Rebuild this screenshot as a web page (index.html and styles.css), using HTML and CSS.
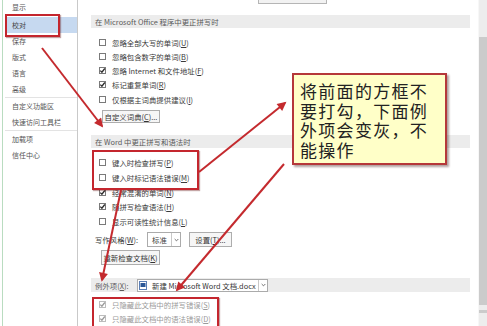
FILE: index.html
```html
<!DOCTYPE html>
<html lang="zh-CN">
<head>
<meta charset="utf-8">
<title>校对</title>
<link rel="stylesheet" href="styles.css">
</head>
<body>
<div class="app">
  <nav class="sidebar">
    <div class="nav-item first">显示</div>
    <div class="nav-item active">校对</div>
    <div class="nav-item">保存</div>
    <div class="nav-item">版式</div>
    <div class="nav-item">语言</div>
    <div class="nav-item">高级</div>
    <div class="nav-sep"></div>
    <div class="nav-item">自定义功能区</div>
    <div class="nav-item">快速访问工具栏</div>
    <div class="nav-sep"></div>
    <div class="nav-item">加载项</div>
    <div class="nav-item">信任中心</div>
  </nav>

  <main class="main">
    <div class="top-btn"></div>

    <div class="band band1">在 Microsoft Office 程序中更正拼写时</div>
    <ul class="opts opts1">
      <li><span class="cb"></span>忽略全部大写的单词(<u>U</u>)</li>
      <li><span class="cb"></span>忽略包含数字的单词(<u>B</u>)</li>
      <li><span class="cb"><svg viewBox="0 0 7 7"><path d="M1.3 3.6 L2.9 5.2 L5.8 1.5"/></svg></span>忽略 Internet 和文件地址(<u>F</u>)</li>
      <li><span class="cb"><svg viewBox="0 0 7 7"><path d="M1.3 3.6 L2.9 5.2 L5.8 1.5"/></svg></span>标记重复单词(<u>R</u>)</li>
      <li><span class="cb"></span>仅根据主词典提供建议(<u>I</u>)</li>
    </ul>
    <div class="btn btn-dict">自定义词典(<u>C</u>)...</div>

    <div class="band band2">在 Word 中更正拼写和语法时</div>
    <ul class="opts opts2">
      <li><span class="cb"></span>键入时检查拼写(<u>P</u>)</li>
      <li><span class="cb"></span>键入时标记语法错误(<u>M</u>)</li>
      <li><span class="cb"><svg viewBox="0 0 7 7"><path d="M1.3 3.6 L2.9 5.2 L5.8 1.5"/></svg></span>经常混淆的单词(<u>N</u>)</li>
      <li><span class="cb"><svg viewBox="0 0 7 7"><path d="M1.3 3.6 L2.9 5.2 L5.8 1.5"/></svg></span>随拼写检查语法(<u>H</u>)</li>
      <li><span class="cb"></span>显示可读性统计信息(<u>L</u>)</li>
    </ul>
    <div class="style-row">
      <span class="style-label">写作风格(<u>W</u>):</span>
      <span class="select select-style"><span class="sel-text">标准</span><span class="sel-arrow"><svg viewBox="0 0 6 4"><path d="M0.8 0.8 L3 3 L5.2 0.8"/></svg></span></span>
      <span class="btn btn-set">设置(<u>T</u>)...</span>
    </div>
    <div class="btn btn-recheck">重新检查文档(<u>K</u>)</div>

    <div class="band band3">
      <span class="exc-label">例外项(<u>X</u>):</span>
      <span class="select select-doc">
        <span class="doc-icon"><svg viewBox="0 0 8 9"><rect x="0.5" y="0.5" width="7" height="8" fill="#fff" stroke="#5b7fb6"/><rect x="1.5" y="2" width="5" height="4" fill="#2b5797"/></svg></span>
        <span class="sel-text">新建 Microsoft Word 文档.docx</span>
        <span class="sel-arrow"><svg viewBox="0 0 6 4"><path d="M0.8 0.8 L3 3 L5.2 0.8"/></svg></span>
      </span>
    </div>
    <ul class="opts opts3">
      <li><span class="cb dis"><svg viewBox="0 0 7 7"><path d="M1.3 3.6 L2.9 5.2 L5.8 1.5"/></svg></span>只隐藏此文档中的拼写错误(<u>S</u>)</li>
      <li><span class="cb dis"><svg viewBox="0 0 7 7"><path d="M1.3 3.6 L2.9 5.2 L5.8 1.5"/></svg></span>只隐藏此文档中的语法错误(<u>D</u>)</li>
    </ul>
  </main>

  <div class="scrollbar">
    <div class="thumb"></div>
    <div class="thumb-end"></div>
  </div>
</div>

<div class="mark mark-nav"></div>
<div class="mark mark-word"></div>
<div class="mark mark-exc"></div>

<div class="callout">
  <div class="cl">将前面的方框不</div>
  <div class="cl">要打勾，下面例</div>
  <div class="cl">外项会变灰，不</div>
  <div class="cl">能操作</div>
</div>

<svg class="arrows" viewBox="0 0 487 326" width="487" height="326">
  <defs>
    <marker id="head" viewBox="0 0 10 10" refX="8" refY="5" markerWidth="5" markerHeight="4.5" orient="auto" markerUnits="strokeWidth">
      <path d="M0 0 L10 5 L0 10 z" fill="#c42a2e"/>
    </marker>
  </defs>
  <line x1="42" y1="48" x2="102" y2="126" marker-end="url(#head)"/>
  <line x1="199" y1="172" x2="285" y2="103" marker-end="url(#head)"/>
  <line x1="284" y1="164" x2="177" y2="290" marker-end="url(#head)"/>
  <line x1="121" y1="190" x2="102" y2="280" marker-end="url(#head)"/>
</svg>
</body>
</html>
```
FILE: styles.css
```css
* { box-sizing: border-box; }
html, body { margin: 0; padding: 0; }
body {
  width: 487px;
  height: 326px;
  overflow: hidden;
  background: #fff;
  font-family: "Noto Sans CJK SC", "Noto Sans", sans-serif;
  color: #333;
  position: relative;
}
u { text-decoration: underline; text-underline-offset: 1px; }

.app { display: flex; height: 326px; }

/* sidebar */
.sidebar {
  width: 78px;
  flex: none;
  border-right: 1px solid #c9c9c9;
  padding: 1px 0 0 5px;
  box-shadow: inset 2px 0 0 #fff, inset 3px 0 0 #b9dcc0;
  font-size: 7px;
  color: #555;
}
.nav-item {
  height: 16px;
  display: flex;
  align-items: center;
  padding-left: 7px;
  white-space: nowrap;
}
.nav-item.first { padding-bottom: 4px; }
.nav-item.active { background: #c6d9f0; color: #444; }
.nav-sep { height: 1px; background: #e3e3e3; }

/* main */
.main {
  flex: 1;
  display: flex;
  flex-direction: column;
  padding: 0 8px 0 13px;
  font-size: 7.4px;
  color: #3a3a3a;
}
.top-btn {
  margin-left: 167px;
  width: 69px;
  height: 4px;
  border: 1px solid #b5b5b5;
  border-top: none;
  background: #f2f2f2;
}
.band {
  background: #ececec;
  color: #5a5a5a;
  display: flex;
  align-items: center;
  padding-left: 4px;
  white-space: nowrap;
}
.band1 { margin-top: 11px; height: 13px; }
.band2 { margin-top: 12px; height: 13px; }
.band3 { margin-top: 13px; height: 14px; }

.opts { list-style: none; margin: 0; padding: 0 0 0 8px; }
.opts li { display: flex; align-items: center; white-space: nowrap; }
.opts1 { margin-top: 7px; }
.opts1 li { height: 14.25px; }
.opts2 { margin-top: 7px; }
.opts2 li { height: 14.75px; }
.opts3 { margin-top: 5px; color: #9a9a9a; }
.opts3 li { height: 14px; }

.cb {
  width: 7px;
  height: 7px;
  border: 1px solid #7a7a7a;
  background: #fff;
  margin-right: 6px;
  flex: none;
  position: relative;
}
.cb svg {
  position: absolute;
  left: -1px;
  top: -1px;
  width: 7px;
  height: 7px;
}
.cb svg path { fill: none; stroke: #2a2a2a; stroke-width: 1.3; }
.cb.dis { border-color: #bdbdbd; }
.cb.dis svg path { stroke: #9a9a9a; }

.btn {
  display: flex;
  align-items: center;
  justify-content: center;
  border: 1px solid #adadad;
  background: #f6f6f6;
  white-space: nowrap;
  color: #333;
}
.btn-dict { margin: 4px 0 0 11px; width: 58px; height: 13px; }
.style-row {
  margin-top: 3px;
  height: 15px;
  display: flex;
  align-items: center;
  padding-left: 4px;
}
.style-label { width: 52px; }
.select {
  display: flex;
  align-items: center;
  border: 1px solid #ababab;
  background: #fff;
  height: 100%;
}
.select-style { width: 34px; }
.select .sel-text { flex: 1; padding-left: 4px; white-space: nowrap; }
.sel-arrow {
  width: 9px;
  height: 100%;
  border-left: 1px solid #c8c8c8;
  display: flex;
  align-items: center;
  justify-content: center;
}
.sel-arrow svg { width: 5px; height: 4px; }
.sel-arrow path { fill: none; stroke: #555; stroke-width: 1; }
.btn-set { margin-left: 8px; width: 43px; height: 15px; }
.btn-recheck { margin: 3px 0 0 10px; width: 59px; height: 15px; }

.exc-label { width: 42px; }
.select-doc { width: 131px; height: 13px; }
.doc-icon { width: 8px; height: 9px; margin-left: 1px; display: flex; }
.doc-icon svg { width: 8px; height: 9px; }
.select-doc .sel-text { padding-left: 5px; color: #333; }

/* scrollbar */
.scrollbar {
  width: 9px;
  flex: none;
  background: #ededed;
  border-left: 1px solid #f7f7f7;
  display: flex;
  flex-direction: column;
  align-items: stretch;
}
.thumb { margin-top: 37px; height: 268px; background: #cbcbcb; }
.thumb-end { margin-top: 5px; height: 3px; background: #cbcbcb; }

/* annotations */
.mark {
  position: absolute;
  border: 2px solid #c4262e;
  box-shadow: 1px 1px 1px rgba(90, 0, 0, 0.35);
}
.mark-nav { left: 5px; top: 14px; width: 55px; height: 23px; }
.mark-word { left: 92px; top: 150px; width: 107px; height: 40px; }
.mark-exc { left: 92px; top: 297px; width: 127px; height: 40px; }

.callout {
  position: absolute;
  left: 292px;
  top: 73px;
  width: 155px;
  height: 92px;
  background: #ffffc8;
  border: 2px solid #b5383a;
  box-shadow: 2px 2px 2px rgba(60, 20, 20, 0.4);
  padding: 6px 0 0 6px;
  font-size: 17px;
  letter-spacing: 1.3px;
  color: #222;
  white-space: nowrap;
}
.cl { height: 19.6px; line-height: 19.6px; }

.arrows {
  position: absolute;
  left: 0;
  top: 0;
  pointer-events: none;
}
.arrows line { stroke: #c42a2e; stroke-width: 2; }
```
